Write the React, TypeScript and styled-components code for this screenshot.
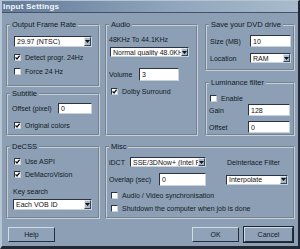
import React from 'react'
import styled, { createGlobalStyle } from 'styled-components'

const GlobalStyle = createGlobalStyle`
  html, body {
    margin: 0;
    padding: 0;
    background: #8c9fb5;
  }
  body {
    font-family: "Liberation Sans", Arial, sans-serif;
    font-size: 7px;
    color: #121a24;
  }
`

const Window = styled.div`
  width: 300px;
  height: 249px;
  box-sizing: border-box;
  background: #8c9fb5;
  border-top: 1px solid #b6c5d4;
  border-left: 2px solid #b6c5d4;
  border-right: 2px solid #1f2833;
  border-bottom: 3px solid #1f2833;
  display: flex;
  flex-direction: column;
  overflow: hidden;
`
const TitleBar = styled.div`
  height: 11px;
  flex: none;
  display: flex;
  align-items: center;
  padding-left: 1px;
  background: linear-gradient(to right, #627b99, #8ea4bb 55%, #a8bbcc);
  border-bottom: 1px solid #43546a;
  color: #f4f7fa;
  font-weight: bold;
  font-size: 8px;
  letter-spacing: 0.2px;
`
const Content = styled.div`
  padding: 7px 3px 0 4px;
  display: flex;
  flex-direction: column;
`
const Main = styled.div`
  display: flex;
  gap: 5px;
`
const Column = styled.div<{ $w: number }>`
  width: ${(p) => p.$w}px;
  display: flex;
  flex-direction: column;
`
const TopRow = styled.div`
  display: flex;
  gap: 7px;
`
const Group = styled.fieldset<{ $h: number; $mt?: number }>`
  box-sizing: border-box;
  height: ${(p) => p.$h}px;
  margin: ${(p) => p.$mt || 0}px 0 0 0;
  padding: 0;
  min-width: 0;
  border: 2px groove #c3d0dd;
`
const Legend = styled.legend`
  font-size: 7.5px;
  line-height: 10px;
  padding: 0 2px;
  margin-left: 2px;
`
const Row = styled.div<{ $mt?: number; $pl?: number; $h?: number }>`
  display: flex;
  align-items: center;
  height: ${(p) => p.$h || 10}px;
  margin-top: ${(p) => p.$mt || 0}px;
  padding-left: ${(p) => p.$pl || 0}px;
  white-space: nowrap;
`
const Label = styled.span<{ $w?: number; $ml?: number }>`
  display: inline-flex;
  width: ${(p) => (p.$w ? `${p.$w}px` : 'auto')};
  margin-left: ${(p) => p.$ml || 0}px;
  flex: none;
`
const Sunken = styled.div<{ $w: number; $h: number }>`
  box-sizing: border-box;
  width: ${(p) => p.$w}px;
  height: ${(p) => p.$h}px;
  flex: none;
  background: #fff;
  border-top: 1px solid #2a3440;
  border-left: 1px solid #2a3440;
  border-bottom: 1px solid #c8d3de;
  border-right: 1px solid #c8d3de;
  display: flex;
  align-items: center;
  overflow: hidden;
  color: #111;
`
const Value = styled.span`
  flex: 1;
  padding-left: 2px;
  overflow: hidden;
  white-space: nowrap;
`
const DropButton = styled.div`
  box-sizing: border-box;
  width: 7px;
  height: 100%;
  flex: none;
  background: #a9b8c8;
  border-left: 1px solid #e2e8ee;
  border-top: 1px solid #e2e8ee;
  border-right: 1px solid #3a4552;
  border-bottom: 1px solid #3a4552;
  display: flex;
  align-items: center;
  justify-content: center;
`
const Box = styled.div`
  box-sizing: border-box;
  width: 7px;
  height: 7px;
  flex: none;
  background: #fff;
  border-top: 1px solid #2a3440;
  border-left: 1px solid #2a3440;
  border-bottom: 1px solid #c8d3de;
  border-right: 1px solid #c8d3de;
  margin-right: 4px;
  display: flex;
  align-items: center;
  justify-content: center;
`
const Buttons = styled.div`
  display: flex;
  margin-top: 8px;
  padding-left: 2px;
  padding-right: 2px;
  gap: 5px;
`
const Spacer = styled.div`
  flex: 1;
`
const Button = styled.div<{ $w: number; $default?: boolean }>`
  box-sizing: border-box;
  width: ${(p) => p.$w}px;
  height: 15px;
  display: flex;
  align-items: center;
  justify-content: center;
  background: #8fa2b8;
  border-top: 1px solid #d2dce6;
  border-left: 1px solid #d2dce6;
  border-right: 1px solid #26303c;
  border-bottom: 1px solid #26303c;
  outline: ${(p) => (p.$default ? '1px solid #1d2530' : 'none')};
`

const Combo: React.FC<{ w: number; h?: number; value: string }> = ({ w, h = 10, value }) => (
  <Sunken $w={w} $h={h}>
    <Value>{value}</Value>
    <DropButton>
      <svg width="5" height="3" viewBox="0 0 5 3">
        <path d="M0 0H5L2.5 3Z" fill="#111" />
      </svg>
    </DropButton>
  </Sunken>
)

const Check: React.FC<{ checked?: boolean; label: string; mt?: number; pl?: number }> = ({ checked, label, mt, pl }) => (
  <Row $mt={mt} $pl={pl}>
    <Box>
      {checked && (
        <svg width="5" height="5" viewBox="0 0 5 5">
          <path d="M0.5 2.4L2 4L4.6 0.6" stroke="#111" strokeWidth="1.3" fill="none" />
        </svg>
      )}
    </Box>
    <span>{label}</span>
  </Row>
)

const App: React.FC = () => {
  return (
    <>
      <GlobalStyle />
      <Window>
        <TitleBar>Input Settings</TitleBar>
        <Content>
          <Main>
            <Column $w={94}>
              <Group $h={67}>
                <Legend>Output Frame Rate</Legend>
                <Row $mt={6} $pl={6} $h={11}>
                  <Combo w={78} h={11} value="29.97 (NTSC)" />
                </Row>
                <Check checked label="Detect progr. 24Hz" mt={5} pl={6} />
                <Check label="Force 24 Hz" mt={4} pl={6} />
              </Group>
              <Group $h={47} $mt={2}>
                <Legend>Subtitle</Legend>
                <Row $mt={4} $pl={4} $h={11}>
                  <Label $w={46}>Offset (pixel)</Label>
                  <Sunken $w={34} $h={11}><Value>0</Value></Sunken>
                </Row>
                <Check checked label="Original colors" mt={6} pl={6} />
              </Group>
              <Group $h={77} $mt={6}>
                <Legend>DeCSS</Legend>
                <Check checked label="Use ASPI" mt={4} pl={6} />
                <Check checked label="DeMacroVision" mt={3} pl={6} />
                <Row $mt={7} $pl={5}>
                  <Label>Key search</Label>
                </Row>
                <Row $mt={3} $pl={5} $h={11}>
                  <Combo w={79} h={11} value="Each VOB ID" />
                </Row>
              </Group>
            </Column>
            <Column $w={190}>
              <TopRow>
                <Column $w={93}>
                  <Group $h={116}>
                    <Legend>Audio</Legend>
                    <Row $mt={4} $pl={2}>
                      <Label>48KHz To 44.1KHz</Label>
                    </Row>
                    <Row $mt={3} $pl={3}>
                      <Combo w={79} value="Normal quality 48.0KHz" />
                    </Row>
                    <Row $mt={11} $pl={2} $h={13}>
                      <Label $w={30}>Volume</Label>
                      <Sunken $w={40} $h={13}><Value>3</Value></Sunken>
                    </Row>
                    <Check checked label="Dolby Surround" mt={5} pl={4} />
                  </Group>
                </Column>
                <Column $w={90}>
                  <Group $h={51}>
                    <Legend>Save your DVD drive</Legend>
                    <Row $mt={5} $pl={3} $h={12}>
                      <Label $w={40}>Size (MB)</Label>
                      <Sunken $w={41} $h={12}><Value>10</Value></Sunken>
                    </Row>
                    <Row $mt={6} $pl={3}>
                      <Label $w={40}>Location</Label>
                      <Combo w={41} value="RAM" />
                    </Row>
                  </Group>
                  <Group $h={58} $mt={7}>
                    <Legend>Luminance filter</Legend>
                    <Check label="Enable" mt={5} pl={3} />
                    <Row $mt={1} $pl={2} $h={12}>
                      <Label $w={39}>Gain</Label>
                      <Sunken $w={42} $h={12}><Value>128</Value></Sunken>
                    </Row>
                    <Row $mt={5} $pl={2} $h={12}>
                      <Label $w={39}>Offset</Label>
                      <Sunken $w={42} $h={12}><Value>0</Value></Sunken>
                    </Row>
                  </Group>
                </Column>
              </TopRow>
              <Group $h={77} $mt={6}>
                <Legend>Misc</Legend>
                <Row $mt={5} $pl={2}>
                  <Label $w={21}>iDCT</Label>
                  <Combo w={76} value="SSE/3DNow+ (Intel P4)" />
                  <Label $ml={21}>Deinterlace Filter</Label>
                </Row>
                <Row $mt={6} $pl={2} $h={13}>
                  <Label $w={50}>Overlap (sec)</Label>
                  <Sunken $w={47} $h={13}><Value>0</Value></Sunken>
                  <Label $ml={20}>
                    <Combo w={62} value="Interpolate" />
                  </Label>
                </Row>
                <Check label="Audio / Video synchronisation" mt={4} pl={4} />
                <Check label="Shutdown the computer when job is done" mt={3} pl={4} />
              </Group>
            </Column>
          </Main>
          <Buttons>
            <Button $w={47}>Help</Button>
            <Spacer />
            <Button $w={47}>OK</Button>
            <Button $w={49} $default>Cancel</Button>
          </Buttons>
        </Content>
      </Window>
    </>
  )
}

export default App
